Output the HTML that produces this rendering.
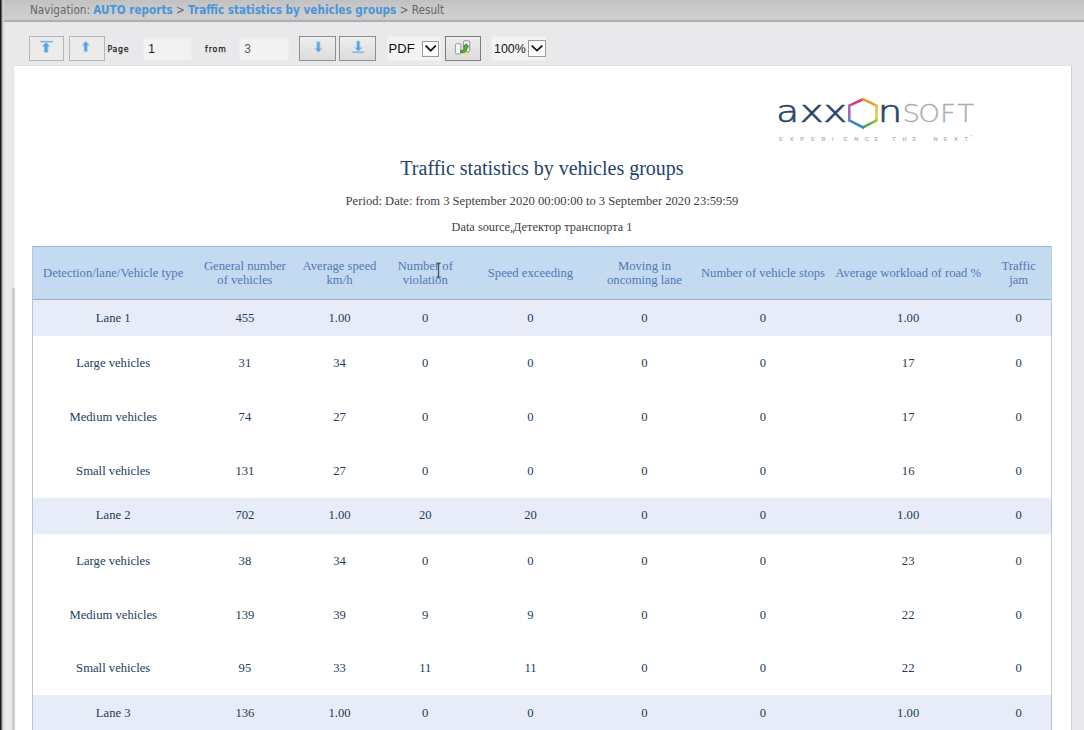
<!DOCTYPE html>
<html lang="en">
<head>
<meta charset="utf-8">
<title>Traffic statistics by vehicles groups - Result</title>
<style>
*{box-sizing:border-box;margin:0;padding:0}
html,body{width:1084px;height:730px;overflow:hidden;background:#e9e9eb;}
body{position:relative;font-family:"Liberation Sans","DejaVu Sans",sans-serif;}
#edge{position:absolute;left:0;top:0;width:5px;height:730px;background:linear-gradient(90deg,#141414 0,#1e1e1e 1px,#8c8c8c 1.8px,#cfcfd1 2.8px,rgba(225,225,227,0) 5px);z-index:5}
#edge2{position:absolute;left:12px;top:288px;width:2.5px;height:442px;background:linear-gradient(90deg,#d4d4d6,#cbcbcd 50%,#d6d6d8);z-index:1}
#nav{position:absolute;left:0;top:0;width:1084px;height:22px;letter-spacing:0px;
 background:linear-gradient(#c1c1c1 0,#c9c9c9 35%,#cecece 80%,#cccccc 88%,#b9b9b9 92%,#a2a2a2 96%,#b4b4b4 100%);
 font-family:"DejaVu Sans Condensed","DejaVu Sans","Liberation Sans",sans-serif;font-size:11.65px;color:#666;line-height:21px;padding-left:30px;white-space:nowrap}
#nav b{color:#4a95d8;font-weight:bold}
#tb{position:absolute;left:0;top:22px;width:1084px;height:44px;background:#e9e9eb}
.btn{position:absolute;top:14px;height:25px;border:1px solid #b6b6b6;background:#ebebeb}
.b1{border-color:#8f8f8f;background:linear-gradient(#eeeeee,#e6e6e6 45%,#dcdcdc)}.b2{border-color:#7d7d7d;background:linear-gradient(#ededed,#e4e4e4 50%,#dedede)}
.lbl{position:absolute;top:21px;font-family:"DejaVu Sans Condensed","DejaVu Sans",sans-serif;font-size:8.7px;letter-spacing:.35px;color:#1c1c1c;line-height:12px;-webkit-text-stroke:0.25px #1c1c1c}
.inp{position:absolute;top:15px;height:24px;background:#f2f2f3;border:1px solid #ededee;font-size:12px;line-height:23px;color:#1a1a1a;padding-left:4.3px}
.sel{position:absolute;top:14px;height:25px;background:#f3f3f4;border:1px solid #eeeeef;font-size:13px;line-height:23px;color:#111;padding-left:.6px}
.sel i{position:absolute;right:1.5px;top:3.5px;width:17px;height:16.5px;border:1px solid #9a9a9a;background:#fbfbfb}

#page{position:absolute;left:14px;top:65px;width:1058px;height:665px;background:#fff;border-top:1px solid #e4e4e6;border-right:1px solid #d2d2d4;border-left:1px solid #f4f4f5}
#title{position:absolute;left:0;top:156px;width:1084px;text-align:center;font-family:"Liberation Serif",serif;font-size:20px;line-height:24px;color:#25436a}
.sub{position:absolute;left:0;width:1084px;text-align:center;font-family:"Liberation Serif",serif;font-size:12.6px;line-height:14px;color:#404040}
#tbl{position:absolute;left:32px;top:246px;width:1020px;border-collapse:separate;border-spacing:0;table-layout:fixed;font-family:"Liberation Serif",serif;font-size:12.67px;color:#243c5c;border-left:1px solid #b7c6d6;border-right:1px solid #bfc8d2}
#tbl th{font-weight:normal;color:#5078b8;background:#c4daf0;height:54px;line-height:14.5px;vertical-align:middle;text-align:center;border-top:1px solid #9db2c6;border-bottom:1px solid #9db2c6;padding:0.5px 0 0 0}
#tbl td{text-align:center;vertical-align:middle;height:53.9px;padding:0;line-height:14px}
#tbl tr.ln td{background:#e8ecf8;height:36px;padding:0 0 1px 0}

</style>
</head>
<body>
<div id="edge"></div><div id="edge2"></div>
<div id="nav">Navigation: <b>AUTO reports</b> &gt; <b>Traffic statistics by vehicles groups</b> &gt; Result</div>
<div id="tb">
 <div class="btn b0" style="left:29px;width:35px"></div>
 <div class="btn b0" style="left:69px;width:36px"></div>
 <div class="lbl" style="left:107.6px;letter-spacing:.7px">Page</div>
 <div class="inp" style="left:143px;width:49px">1</div>
 <div class="lbl" style="left:205px;letter-spacing:.9px">from</div>
 <div class="inp" style="left:239px;width:50px;color:#5a5a5a">3</div>
 <div class="btn b1" style="left:299px;width:37px"></div>
 <div class="btn b1" style="left:339px;width:37px"></div>
 <div class="sel" style="left:387px;width:54px"><span>PDF</span><i></i></div>
 <div class="btn b2" style="left:445px;width:36px"></div>
 <div class="sel" style="left:491px;width:55px;padding-left:2px;font-size:12.4px;line-height:25px"><span>100%</span><i style="right:-1px;width:18px;top:3px"></i></div>
 <svg id="ico" width="560" height="44" viewBox="0 22 560 44" style="position:absolute;left:0;top:0">
  <g fill="#5f9fdc" stroke="#a9d6f6" stroke-width="0.9" stroke-linejoin="round">
   <path d="M40.5 41h12.2v1.3H40.5z" stroke-width="0.5"/>
   <path d="M46 42.3l-4 4.2h2.1v6h3.9v-6h2.1z"/>
   <path d="M85.7 41l-3.7 4.2h2v6.5h3.4v-6.5h2z"/>
   <path d="M318.4 52.6l-3.7-4.3h2.1v-6.6h3.2v6.6h2.1z"/>
   <path d="M358.3 51.5l-4-4.1h2.4v-6.4h3.2v6.4h2.4z"/>
   <path d="M352.1 51.6h11.8v1.2H352.1z" stroke-width="0.5"/>
  </g>
  <g>
   <ellipse cx="466.5" cy="53.3" rx="4.6" ry="2" fill="#ece08a" opacity=".9"/>
   <rect x="463.4" y="40.8" width="6.4" height="11" rx="1.4" fill="#eef7fb" stroke="#7f8894" stroke-width="0.9"/>
   <rect x="455.4" y="43.6" width="5.4" height="10.4" rx="1.4" fill="#f2f7fb" stroke="#8d9297" stroke-width="0.9"/>
   <path d="M460.6 52.7c4.300.4 7-2 6.700-6l1.500.1-2.700-3.100-2.700 3.100 1.500-.1c.2 2.300-1.300 3.900-4.300 4.100z" fill="#58b432" stroke="#347f1c" stroke-width="0.9" stroke-linejoin="round"/>
  </g>
  <g fill="none" stroke="#111" stroke-width="1.7">
   <path d="M425.6 45.7l5.1 5 5.1-5"/>
   <path d="M531.7 45.6l5.3 5 5.3-5"/>
  </g>
 </svg>
</div>
<div id="page"></div>
<svg id="logo" width="220" height="60" viewBox="770 90 220 60" style="position:absolute;left:770px;top:90px">
<defs>
<linearGradient id="g1" gradientUnits="userSpaceOnUse" x1="849" y1="105.5" x2="863" y2="98.5"><stop offset="0" stop-color="#c84c98"/><stop offset=".4" stop-color="#d23c7a"/><stop offset="1" stop-color="#d8406c"/></linearGradient>
<linearGradient id="g2" gradientUnits="userSpaceOnUse" x1="863" y1="98.5" x2="876.5" y2="105.5"><stop offset="0" stop-color="#e8a23a"/><stop offset=".6" stop-color="#de983c"/><stop offset="1" stop-color="#e2b03c"/></linearGradient>
<linearGradient id="g3" gradientUnits="userSpaceOnUse" x1="0" y1="105" x2="0" y2="121"><stop offset="0" stop-color="#e8c43c"/><stop offset="1" stop-color="#e4cc40"/></linearGradient>
<linearGradient id="g4" gradientUnits="userSpaceOnUse" x1="876.5" y1="120.5" x2="863" y2="128"><stop offset="0" stop-color="#96c84c"/><stop offset=".5" stop-color="#5fae48"/><stop offset="1" stop-color="#4aa648"/></linearGradient>
<linearGradient id="g5" gradientUnits="userSpaceOnUse" x1="863" y1="128" x2="849" y2="120.5"><stop offset="0" stop-color="#2a90b8"/><stop offset=".5" stop-color="#2a86c4"/><stop offset="1" stop-color="#4a80c8"/></linearGradient>
<linearGradient id="g6" gradientUnits="userSpaceOnUse" x1="0" y1="121" x2="0" y2="105"><stop offset="0" stop-color="#7a78c2"/><stop offset=".5" stop-color="#9070b8"/><stop offset="1" stop-color="#b46cb0"/></linearGradient>
</defs>
<g font-family="'DejaVu Sans Light','DejaVu Sans','Liberation Sans',sans-serif" font-weight="200" fill="#2b456b" stroke="#2b456b" stroke-width="0.7" font-size="31">
<text transform="translate(776.3,121.7) scale(1.2,1)">a</text>
<text transform="translate(799.8,121.7) scale(1.3,1)">x</text>
<text transform="translate(823.3,121.7) scale(1.3,1)">x</text>
<text transform="translate(877.8,121.7) scale(1.25,1)">n</text>
<text transform="translate(0,121.7) scale(1.15,1)" x="784.7 798.4 817.3 832.4" font-size="24" fill="#a9adb4" stroke="#a9adb4" stroke-width="0.3">SOFT</text>
</g>
<g fill="none" stroke-width="2.6" stroke-linecap="round">
<path d="M849.3 105.6L863 99.2" stroke="url(#g1)"/>
<path d="M863 99.2L876.5 105.6" stroke="url(#g2)"/>
<path d="M876.5 105.6V120.4" stroke="url(#g3)"/>
<path d="M876.5 120.4L863 127.4" stroke="url(#g4)"/>
<path d="M863 127.4L849.3 120.4" stroke="url(#g5)"/>
<path d="M849.3 120.4V105.6" stroke="url(#g6)"/>
</g>
<g font-family="'Liberation Sans',sans-serif" font-size="5.6" font-weight="bold" fill="#b4b4b6">
<text y="140.6" x="778.9 789.7 800.3 811 821.6 832.1 843.6 854.2 864.9 874.5 884 892.3 902.5 912.6 922 933.5 943.6 954 964.5">EXPERIENCE THE NEXT</text>
<text x="970.5" y="138" font-size="4">*</text>
</g>
</svg>
<div id="title">Traffic statistics by vehicles groups</div>
<div class="sub" style="top:194px">Period: Date: from 3 September 2020 00:00:00 to 3 September 2020 23:59:59</div>
<div class="sub" style="top:220px;font-size:12.3px">Data source,Детектор транспорта 1</div>
<table id="tbl">
<colgroup><col style="width:160.4px"><col style="width:103px"><col style="width:86.2px"><col style="width:85.4px"><col style="width:125px"><col style="width:103px"><col style="width:134px"><col style="width:156.4px"><col style="width:64.6px"></colgroup>
<tr><th>Detection/lane/Vehicle type</th><th>General number<br>of vehicles</th><th>Average speed<br>km/h</th><th>Number of<br>violation</th><th>Speed exceeding</th><th>Moving in<br>oncoming lane</th><th>Number of vehicle stops</th><th>Average workload of road %</th><th>Traffic<br>jam</th></tr>
<tr class="ln"><td>Lane 1</td><td>455</td><td>1.00</td><td>0</td><td>0</td><td>0</td><td>0</td><td>1.00</td><td>0</td></tr>
<tr><td>Large vehicles</td><td>31</td><td>34</td><td>0</td><td>0</td><td>0</td><td>0</td><td>17</td><td>0</td></tr>
<tr><td>Medium vehicles</td><td>74</td><td>27</td><td>0</td><td>0</td><td>0</td><td>0</td><td>17</td><td>0</td></tr>
<tr><td>Small vehicles</td><td>131</td><td>27</td><td>0</td><td>0</td><td>0</td><td>0</td><td>16</td><td>0</td></tr>
<tr class="ln"><td>Lane 2</td><td>702</td><td>1.00</td><td>20</td><td>20</td><td>0</td><td>0</td><td>1.00</td><td>0</td></tr>
<tr><td>Large vehicles</td><td>38</td><td>34</td><td>0</td><td>0</td><td>0</td><td>0</td><td>23</td><td>0</td></tr>
<tr><td>Medium vehicles</td><td>139</td><td>39</td><td>9</td><td>9</td><td>0</td><td>0</td><td>22</td><td>0</td></tr>
<tr><td>Small vehicles</td><td>95</td><td>33</td><td>11</td><td>11</td><td>0</td><td>0</td><td>22</td><td>0</td></tr>
<tr class="ln"><td>Lane 3</td><td>136</td><td>1.00</td><td>0</td><td>0</td><td>0</td><td>0</td><td>1.00</td><td>0</td></tr>
</table>
<svg width="10" height="18" viewBox="434 261 10 18" style="position:absolute;left:434px;top:261px"><path d="M436.3 263.2h1.4l.8.7.8-.7h1.4M438.5 263.6v13.2M436.3 277.2h1.4l.8-.7.8.7h1.4" fill="none" stroke="#4a4f58" stroke-width="1.3"/></svg>
</body>
</html>
